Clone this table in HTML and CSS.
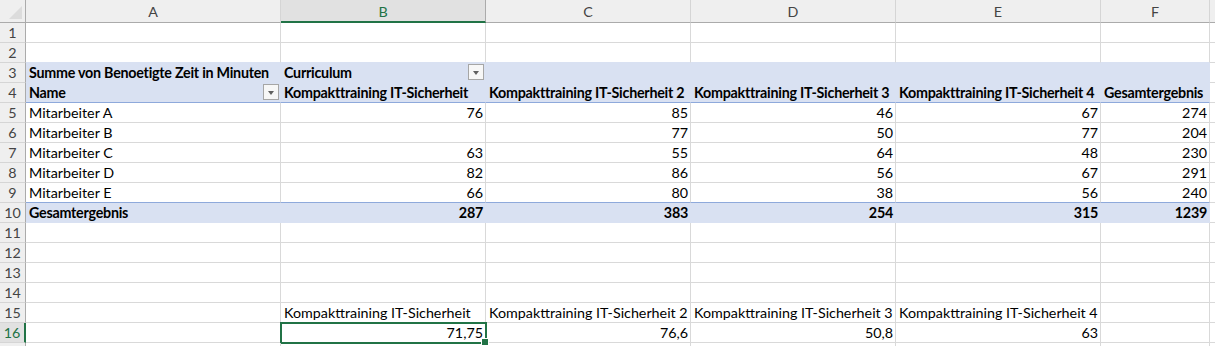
FILE: index.html
```html
<!DOCTYPE html>
<html lang="de">
<head>
<meta charset="utf-8">
<title>Pivot</title>
<link rel="stylesheet" href="styles.css">
</head>
<body>
<div class="sheet">
  <div class="ch corner"><span class="tri"></span></div>
  <div class="ch">A</div>
  <div class="ch sel">B</div>
  <div class="ch">C</div>
  <div class="ch">D</div>
  <div class="ch">E</div>
  <div class="ch">F</div>
  <div class="ch"></div>

  <div class="rh">1</div><div class="c"></div><div class="c"></div><div class="c"></div><div class="c"></div><div class="c"></div><div class="c"></div><div class="c"></div>

  <div class="rh">2</div><div class="c pre"></div><div class="c pre"></div><div class="c pre"></div><div class="c pre"></div><div class="c pre"></div><div class="c pre"></div><div class="c"></div>

  <div class="rh">3</div>
  <div class="c pv b">Summe von Benoetigte Zeit in Minuten</div>
  <div class="c pv b dd">Curriculum<span class="btn"></span></div>
  <div class="c pv"></div><div class="c pv"></div><div class="c pv"></div><div class="c pv"></div><div class="c"></div>

  <div class="rh">4</div>
  <div class="c pv ph b dd">Name<span class="btn"></span></div>
  <div class="c pv ph b">Kompakttraining IT-Sicherheit</div>
  <div class="c pv ph b">Kompakttraining IT-Sicherheit 2</div>
  <div class="c pv ph b">Kompakttraining IT-Sicherheit 3</div>
  <div class="c pv ph b">Kompakttraining IT-Sicherheit 4</div>
  <div class="c pv ph b">Gesamtergebnis</div>
  <div class="c"></div>

  <div class="rh">5</div><div class="c">Mitarbeiter A</div><div class="c n">76</div><div class="c n">85</div><div class="c n">46</div><div class="c n">67</div><div class="c n">274</div><div class="c"></div>
  <div class="rh">6</div><div class="c">Mitarbeiter B</div><div class="c n"></div><div class="c n">77</div><div class="c n">50</div><div class="c n">77</div><div class="c n">204</div><div class="c"></div>
  <div class="rh">7</div><div class="c">Mitarbeiter C</div><div class="c n">63</div><div class="c n">55</div><div class="c n">64</div><div class="c n">48</div><div class="c n">230</div><div class="c"></div>
  <div class="rh">8</div><div class="c">Mitarbeiter D</div><div class="c n">82</div><div class="c n">86</div><div class="c n">56</div><div class="c n">67</div><div class="c n">291</div><div class="c"></div>
  <div class="rh">9</div><div class="c pt">Mitarbeiter E</div><div class="c n pt">66</div><div class="c n pt">80</div><div class="c n pt">38</div><div class="c n pt">56</div><div class="c n pt">240</div><div class="c"></div>

  <div class="rh">10</div>
  <div class="c pv b">Gesamtergebnis</div>
  <div class="c pv b n">287</div>
  <div class="c pv b n">383</div>
  <div class="c pv b n">254</div>
  <div class="c pv b n">315</div>
  <div class="c pv b n">1239</div>
  <div class="c"></div>

  <div class="rh">11</div><div class="c"></div><div class="c"></div><div class="c"></div><div class="c"></div><div class="c"></div><div class="c"></div><div class="c"></div>
  <div class="rh">12</div><div class="c"></div><div class="c"></div><div class="c"></div><div class="c"></div><div class="c"></div><div class="c"></div><div class="c"></div>
  <div class="rh">13</div><div class="c"></div><div class="c"></div><div class="c"></div><div class="c"></div><div class="c"></div><div class="c"></div><div class="c"></div>
  <div class="rh">14</div><div class="c"></div><div class="c"></div><div class="c"></div><div class="c"></div><div class="c"></div><div class="c"></div><div class="c"></div>

  <div class="rh">15</div>
  <div class="c"></div>
  <div class="c">Kompakttraining IT-Sicherheit</div>
  <div class="c">Kompakttraining IT-Sicherheit 2</div>
  <div class="c">Kompakttraining IT-Sicherheit 3</div>
  <div class="c">Kompakttraining IT-Sicherheit 4</div>
  <div class="c"></div>
  <div class="c"></div>

  <div class="rh selrow">16</div>
  <div class="c"></div>
  <div class="c n active">71,75</div>
  <div class="c n">76,6</div>
  <div class="c n">50,8</div>
  <div class="c n">63</div>
  <div class="c"></div>
  <div class="c"></div>

  <div class="rh"></div><div class="c"></div><div class="c"></div><div class="c"></div><div class="c"></div><div class="c"></div><div class="c"></div><div class="c"></div>
</div>
</body>
</html>
```

FILE: styles.css
```css
html, body {
  margin: 0;
  padding: 0;
  background: #ffffff;
}

body {
  font-family: Lato, "Open Sans", sans-serif;
  font-size: 14.3px;
  color: #000;
  overflow: hidden;
}

.sheet {
  display: grid;
  grid-template-columns: 26px 255px 205px 205px 205px 205px 109px 1fr;
  grid-template-rows: 23px repeat(17, 20px);
  width: 1215px;
}

.ch {
  box-sizing: border-box;
  background: #efefef;
  border-right: 1px solid #d5d5d5;
  border-bottom: 1px solid #ababab;
  color: #444;
  display: flex;
  align-items: center;
  justify-content: center;
  padding-top: 1px;
}

.ch.corner {
  border-right: 1px solid #ababab;
  position: relative;
}

.tri {
  position: absolute;
  right: 3px;
  bottom: 3px;
  width: 0;
  height: 0;
  border-left: 13px solid transparent;
  border-bottom: 13px solid #dcdcdc;
}

.ch.sel {
  background: #e1e1e1;
  color: #217346;
  border-bottom: 2px solid #217346;
  border-right-color: #ababab;
}

.rh {
  box-sizing: border-box;
  background: #efefef;
  border-right: 1px solid #ababab;
  border-bottom: 1px solid #d5d5d5;
  color: #444;
  display: flex;
  align-items: center;
  justify-content: center;
}

.rh.selrow {
  background: #e1e1e1;
  color: #217346;
  border-right: 2px solid #217346;
}

.c {
  box-sizing: border-box;
  border-right: 1px solid #d9d9d9;
  border-bottom: 1px solid #d9d9d9;
  padding: 0 3px;
  white-space: nowrap;
  display: flex;
  align-items: flex-end;
  line-height: 18px;
  position: relative;
}

.c.n {
  justify-content: flex-end;
  padding-right: 2px;
}

.c.b {
  font-weight: bold;
  letter-spacing: -0.25px;
}

.c.pre {
  border-bottom-color: #d9e1f2;
}

.c.pv {
  background: #d9e1f2;
  border-right-color: #d9e1f2;
  border-bottom-color: #d9e1f2;
}

.c.pv.ph {
  border-bottom-color: #8ea9db;
}

.c.pt {
  border-bottom-color: #8ea9db;
}

.dd .btn {
  position: absolute;
  right: 1px;
  bottom: 2px;
  width: 16px;
  height: 16px;
  box-sizing: border-box;
  background: #f7f7f7;
  border: 1px solid #a6a6a6;
}

.dd .btn::after {
  content: "";
  position: absolute;
  left: 4px;
  top: 6px;
  width: 0;
  height: 0;
  border-left: 3.5px solid transparent;
  border-right: 3.5px solid transparent;
  border-top: 4px solid #606060;
}

.c.active {
  outline: 2px solid #217346;
  outline-offset: -1px;
}

.c.active::after {
  content: "";
  position: absolute;
  right: -4px;
  bottom: -4px;
  width: 6px;
  height: 6px;
  background: #217346;
  border: 1px solid #fff;
  z-index: 2;
}
```
